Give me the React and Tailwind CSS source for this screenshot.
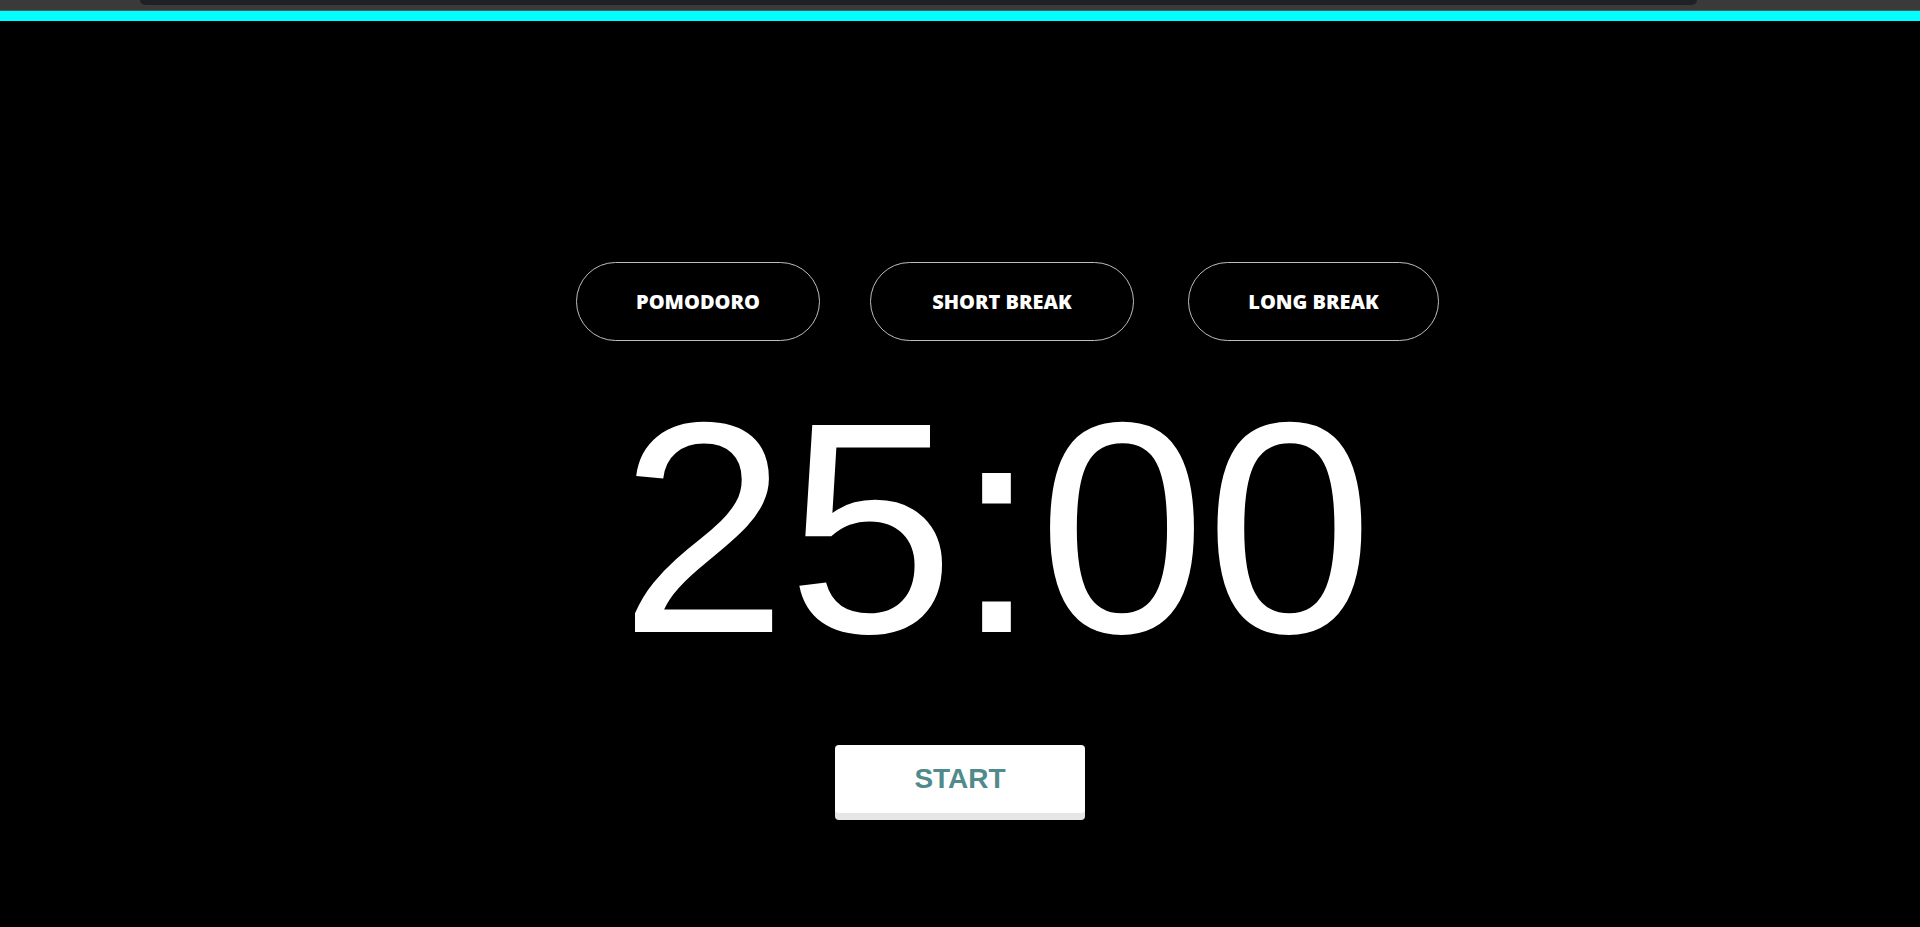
export default function App() {
  return (
    <div className="min-h-[927px] w-full bg-black flex flex-col overflow-hidden">
      <div className="h-[10px] bg-[#3a3a3a] flex pl-[140px] pr-[223px]">
        <div className="h-[5px] flex-1 bg-[#202124] rounded-b-[6px]" />
      </div>
      <div className="h-px bg-[#5a5a5a]" />
      <div className="h-[10px] bg-[#00ffff]" />
      <div
        className="flex justify-center pl-[95px] mt-[241px] text-[20px] font-extrabold text-white"
        style={{ fontFamily: '"Open Sans", "Noto Sans", sans-serif' }}
      >
        <button className="w-[244px] h-[79px] rounded-full border border-[#bdbdbd] bg-black flex items-center justify-center">
          POMODORO
        </button>
        <button className="ml-[50px] w-[264px] h-[79px] rounded-full border border-[#bdbdbd] bg-black flex items-center justify-center">
          SHORT BREAK
        </button>
        <button className="ml-[54px] w-[251px] h-[79px] rounded-full border border-[#bdbdbd] bg-black flex items-center justify-center">
          LONG BREAK
        </button>
      </div>
      <div
        className="flex justify-center pl-[73px] mt-[37px] text-white text-[301px] leading-none"
        style={{ fontFamily: '"Liberation Sans", Arial, sans-serif' }}
      >
        25:00
      </div>
      <div className="flex justify-center mt-[66px]">
        <button
          className="w-[250px] h-[68px] bg-white rounded-[4px] shadow-[0_7px_0_#e6e6e6] text-[#518a8b] text-[28px] font-bold flex items-center justify-center"
          style={{ fontFamily: '"Liberation Sans", Arial, sans-serif' }}
        >
          START
        </button>
      </div>
    </div>
  );
}
